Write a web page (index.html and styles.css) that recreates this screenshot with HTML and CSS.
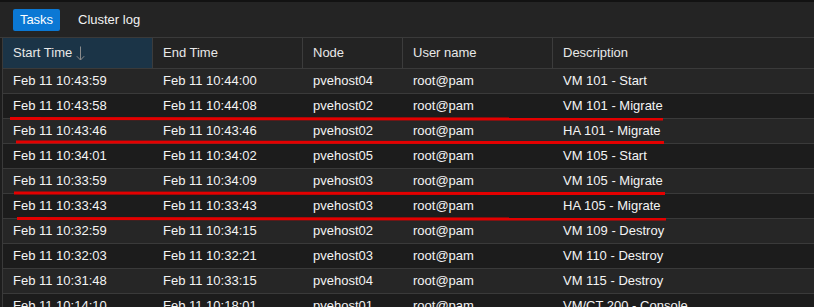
FILE: index.html
```html
<!DOCTYPE HTML>
<html lang="en-US">
<head>
	<meta charset="UTF-8">
	<title>Tasks</title>
	<link rel="stylesheet" href="styles.css">
</head>
<body>
	<div class="topline"></div>
	<div class="toolbar">
		<span class="tab active">Tasks</span>
		<span class="tab">Cluster log</span>
	</div>
	<!-- toolbar end -->

	<div class="grid">
		<div class="row head">
			<div class="cell sorted">Start Time
				<svg class="sort" width="9" height="15" viewBox="0 0 9 15"><path d="M4.5 0.5V14M0.8 10.2L4.5 14L8.2 10.2" fill="none" stroke="#8c8c8c" stroke-width="1"/></svg>
			</div>
			<div class="cell">End Time</div>
			<div class="cell node">Node</div>
			<div class="cell">User name</div>
			<div class="cell desc">Description</div>
		</div>
		<div class="row">
			<div class="cell">Feb 11 10:43:59</div><div class="cell">Feb 11 10:44:00</div><div class="cell node">pvehost04</div><div class="cell">root@pam</div><div class="cell desc">VM 101 - Start</div>
		</div>
		<div class="row">
			<div class="cell">Feb 11 10:43:58</div><div class="cell">Feb 11 10:44:08</div><div class="cell node">pvehost02</div><div class="cell">root@pam</div><div class="cell desc">VM 101 - Migrate</div>
		</div>
		<div class="row">
			<div class="cell">Feb 11 10:43:46</div><div class="cell">Feb 11 10:43:46</div><div class="cell node">pvehost02</div><div class="cell">root@pam</div><div class="cell desc">HA 101 - Migrate</div>
		</div>
		<div class="row">
			<div class="cell">Feb 11 10:34:01</div><div class="cell">Feb 11 10:34:02</div><div class="cell node">pvehost05</div><div class="cell">root@pam</div><div class="cell desc">VM 105 - Start</div>
		</div>
		<div class="row">
			<div class="cell">Feb 11 10:33:59</div><div class="cell">Feb 11 10:34:09</div><div class="cell node">pvehost03</div><div class="cell">root@pam</div><div class="cell desc">VM 105 - Migrate</div>
		</div>
		<div class="row">
			<div class="cell">Feb 11 10:33:43</div><div class="cell">Feb 11 10:33:43</div><div class="cell node">pvehost03</div><div class="cell">root@pam</div><div class="cell desc">HA 105 - Migrate</div>
		</div>
		<div class="row">
			<div class="cell">Feb 11 10:32:59</div><div class="cell">Feb 11 10:34:15</div><div class="cell node">pvehost02</div><div class="cell">root@pam</div><div class="cell desc">VM 109 - Destroy</div>
		</div>
		<div class="row">
			<div class="cell">Feb 11 10:32:03</div><div class="cell">Feb 11 10:32:21</div><div class="cell node">pvehost03</div><div class="cell">root@pam</div><div class="cell desc">VM 110 - Destroy</div>
		</div>
		<div class="row">
			<div class="cell">Feb 11 10:31:48</div><div class="cell">Feb 11 10:33:15</div><div class="cell node">pvehost04</div><div class="cell">root@pam</div><div class="cell desc">VM 115 - Destroy</div>
		</div>
		<div class="row">
			<div class="cell">Feb 11 10:14:10</div><div class="cell">Feb 11 10:18:01</div><div class="cell node">pvehost01</div><div class="cell">root@pam</div><div class="cell desc">VM/CT 200 - Console</div>
		</div>
	</div>
	<!-- grid end -->

	<!-- hand drawn marks over the migrate rows -->
	<svg class="marks" width="814" height="307" viewBox="0 0 814 307">
		<path d="M10 118.5L663 119" stroke="#e40000" stroke-width="3" fill="none"/>
		<path d="M16 142L664 142.5" stroke="#e40000" stroke-width="3" fill="none"/>
		<path d="M14 193L665 193.5" stroke="#e40000" stroke-width="3" fill="none"/>
		<path d="M17 218.5L666 219" stroke="#e40000" stroke-width="3" fill="none"/>
	</svg>
</body>
</html>
```

FILE: styles.css
```css
body {
		margin:0;
		background:#1d1d1d;
		color:#f4f4f4;
		font:13px "Liberation Sans", Arial, sans-serif;
		overflow:hidden;
	}
.topline {
		height:2px;
		background:#121212;
	}
.toolbar {
		display:flex;
		align-items:center;
		gap:18px;
		height:35px;
		padding-left:13px;
		background:#242424;
		border-bottom:1px solid #3a3a3a;
	}
.tab {
		color:#f2f2f2;
		line-height:22px;
	}
.tab.active {
		width:47px;
		text-align:center;
		background:#0b78d4;
		border-radius:2px;
		color:#fff;
	}
.grid {
		margin-left:2px;
		border-left:1px solid #3a3a3a;
	}
.row {
		display:flex;
		height:24px;
		line-height:24px;
		border-bottom:1px solid #3a3a3a;
		background:#262626;
	}
.row:nth-child(odd) {
		background:#1c1c1c;
	}
.row.head {
		height:30px;
		line-height:30px;
		background:#232323;
	}
.cell {
		width:150px;
		padding-left:10px;
		box-sizing:border-box;
		white-space:nowrap;
	}
.cell.node {
		width:100px;
	}
.cell.desc {
		flex:1;
	}
.head .cell {
		border-right:1px solid #3c3c3c;
		color:#e8e8e8;
	}
.head .cell.desc {
		border-right:0;
	}
.head .sorted {
		display:flex;
		align-items:center;
		gap:4px;
		background:#1b3447;
	}
.marks {
		position:absolute;
		left:0;
		top:0;
		pointer-events:none;
	}
```
